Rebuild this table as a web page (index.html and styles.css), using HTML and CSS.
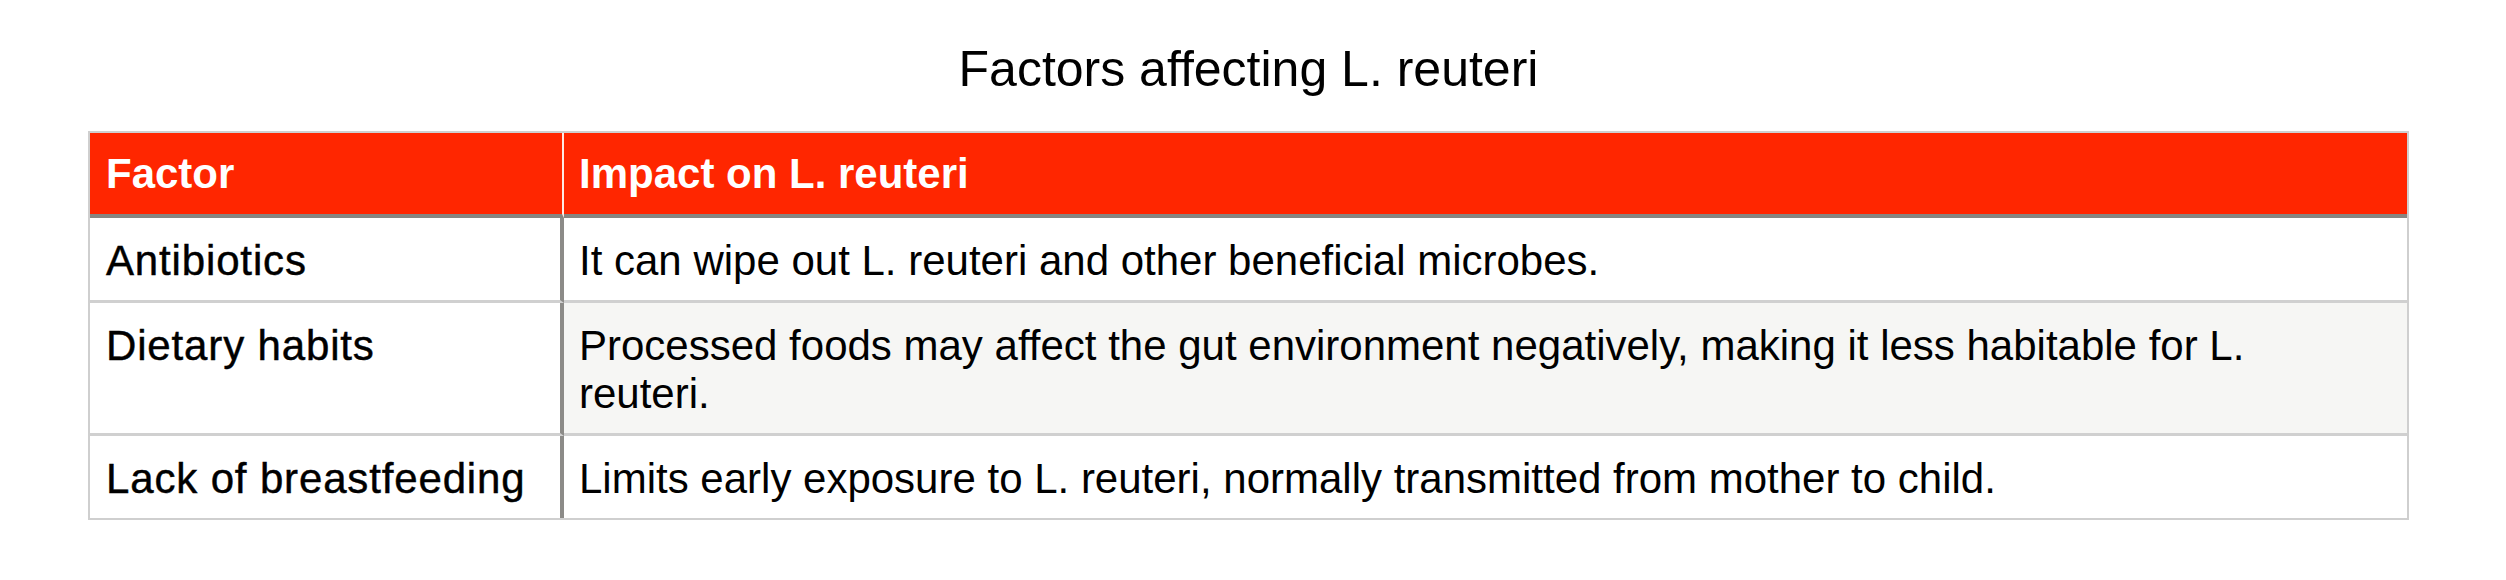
FILE: index.html
```html
<!DOCTYPE html>
<html lang="en">
<head>
<meta charset="utf-8">
<title>Factors affecting L. reuteri</title>
<link rel="stylesheet" href="styles.css">
</head>
<body>
<div class="page">
  <h1 class="title">Factors affecting L. reuteri</h1>
  <table class="factors">
    <thead>
      <tr>
        <th class="col-factor">Factor</th>
        <th class="col-impact">Impact on L. reuteri</th>
      </tr>
    </thead>
    <tbody>
      <tr>
        <td class="col-factor">Antibiotics</td>
        <td class="col-impact">It can wipe out L. reuteri and other beneficial microbes.</td>
      </tr>
      <tr class="alt">
        <td class="col-factor">Dietary habits</td>
        <td class="col-impact">Processed foods may affect the gut environment negatively, making it less habitable for L. reuteri.</td>
      </tr>
      <tr>
        <td class="col-factor">Lack of breastfeeding</td>
        <td class="col-impact">Limits early exposure to L. reuteri, normally transmitted from mother to child.</td>
      </tr>
    </tbody>
  </table>
</div>
</body>
</html>
```

FILE: styles.css
```css
html, body {
  margin: 0;
  padding: 0;
  background: #ffffff;
}

body {
  font-family: "Liberation Sans", Arial, Helvetica, sans-serif;
  color: #000000;
}

.page {
  padding: 41px 97px 0 88px;
}

.title {
  margin: 0 0 34px 0;
  font-size: 50px;
  font-weight: 400;
  line-height: 56px;
  text-align: center;
}

.factors {
  width: 100%;
  table-layout: fixed;
  border-collapse: separate;
  border-spacing: 0;
  border: 2px solid #cfcfcf;
  font-size: 42px;
  line-height: 48px;
}

.factors th,
.factors td {
  box-sizing: border-box;
  text-align: left;
  vertical-align: top;
}

.factors th {
  background: #ff2600;
  color: #ffffff;
  font-weight: 700;
  padding: 17px 15px 16px 15px;
  border-bottom: 4px solid #878580;
}

.factors th.col-factor {
  width: 474px;
  padding-left: 16px;
  border-right: 2px solid #ffe9e4;
}

.factors td {
  padding: 19px 30px 15px 15px;
  border-bottom: 3px solid #d0d0d0;
}

.factors tr:last-child td {
  border-bottom: none;
}

.factors td.col-factor {
  padding-left: 16px;
  padding-right: 8px;
  border-right: 4px solid #8c8b88;
  letter-spacing: 0.85px;
  -webkit-text-stroke: 0.45px #000000;
}

.factors tr.alt td.col-impact {
  background: #f6f6f4;
}
```
